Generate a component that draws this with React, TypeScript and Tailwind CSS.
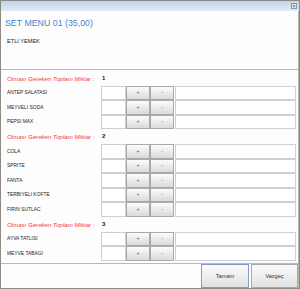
import React from "react";

type Group = {
  total: number;
  items: string[];
};

const groups: Group[] = [
  { total: 1, items: ["ANTEP SALATASI", "MEYVELI SODA", "PEPSI MAX"] },
  { total: 2, items: ["COLA", "SPRITE", "FANTA", "TERBIYELI KOFTE", "FIRIN SUTLAC"] },
  { total: 3, items: ["AYVA TATLISI", "MEYVE TABAGI"] },
];

function ItemRow({ name }: { name: string }) {
  return (
    <div className="flex h-[14.6px] items-stretch">
      <div className="w-[100px] pl-[6px] flex items-center text-[4.9px] text-[#222]">
        {name}
      </div>
      <div className="w-[25px] border border-[#cfcfcf] bg-white" />
      <button className="w-[24px] border border-[#a9a9a9] bg-gradient-to-b from-[#fcfcfc] to-[#dadada] text-[5px] text-[#555] flex items-center justify-center">
        +
      </button>
      <button className="w-[24px] border border-[#a9a9a9] bg-gradient-to-b from-[#fcfcfc] to-[#dadada] text-[5px] text-[#555] flex items-center justify-center">
        -
      </button>
      <div className="ml-[1px] w-[121px] border border-[#cdd0d6] bg-white" />
    </div>
  );
}

export default function App() {
  return (
    <div className="w-[300px] h-[289px] flex flex-col border border-[#8c8c84] bg-[#fdfdfd] font-['Liberation_Sans',Arial,sans-serif] overflow-hidden">
      {/* title bar */}
      <div className="h-[10px] flex items-center justify-end pr-[2px] bg-gradient-to-b from-[#c3d2ea] to-[#e2eaf6]">
        <div className="w-[6px] h-[6px] border border-[#8c97a8] bg-[#d6dde8] flex items-center justify-center">
          <div className="w-[2px] h-[2px] bg-[#8c97a8]" />
        </div>
      </div>

      <div className="flex-1 flex flex-col border-r border-[#b4b4b4]">
        {/* header */}
        <div className="h-[59px] border-b border-[#b8b8b8] flex flex-col">
          <div className="pl-[4px] pt-[7px] text-[8.8px] text-[#4a86c8] leading-[11px]">
            SET MENU 01 (35,00)
          </div>
          <div className="pl-[6px] pt-[8px] text-[5.6px] text-[#222] leading-[8px]">
            ETLI YEMEK
          </div>
        </div>

        {/* groups */}
        <div className="flex flex-col pt-[1px] pr-[2px]">
          {groups.map((g) => (
            <div key={g.total} className="flex flex-col">
              <div className="flex h-[14.6px] items-center">
                <div className="w-[95px] pl-[6px] italic text-[6.1px] text-[#ee3a44]">
                  Olması Gereken Toplam Miktar :
                </div>
                <div className="pl-[6px] text-[6px] font-bold text-[#222]">{g.total}</div>
              </div>
              {g.items.map((name) => (
                <ItemRow key={name} name={name} />
              ))}
            </div>
          ))}
        </div>

        {/* footer */}
        <div className="mt-auto h-[25px] border-t border-[#b8b8b8] flex justify-end items-start">
          <button className="w-[48px] h-[24px] border border-[#7f9dc4] bg-gradient-to-b from-[#fbfbfb] to-[#e2e2e2] text-[5.6px] text-[#333] flex items-center justify-center">
            Tamam
          </button>
          <button className="ml-[2px] w-[47px] h-[24px] border border-[#a9a9a9] bg-gradient-to-b from-[#fbfbfb] to-[#e2e2e2] text-[5.6px] text-[#333] flex items-center justify-center">
            Vazgeç
          </button>
        </div>
      </div>
    </div>
  );
}
